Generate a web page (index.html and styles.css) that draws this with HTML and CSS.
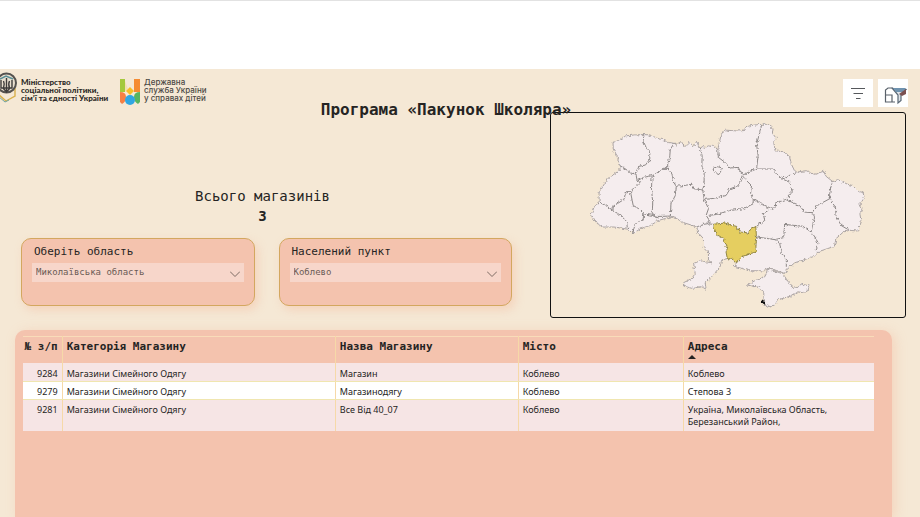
FILE: index.html
```html
<!DOCTYPE html>
<html lang="uk">
<head>
<meta charset="utf-8">
<title>Програма «Пакунок Школяра»</title>
<link rel="stylesheet" href="styles.css">
</head>
<body>
<main class="report">
  <header class="header">
    <div class="logos">
      <div class="logo ministry">
        <svg class="emblem" viewBox="0 0 17 34" aria-hidden="true">
          <path d="M-2 23 L6 30 L15 25 V17" fill="none" stroke="#d8b04c" stroke-width="1.4"/>
          <path d="M-2 25 L5 31 L9 29" fill="none" stroke="#6fa3a0" stroke-width="1"/>
          <circle cx="6.500" cy="12" r="9.500" fill="#e9dfcf" stroke="#55524f" stroke-width="2"/>
          <path d="M0 8 L6 5 L13 8" fill="none" stroke="#5b8f96" stroke-width="1.500"/>
          <path d="M1 9 V17 H12 V9 M6.500 7 V21 M3.500 10 Q5 13 3.500 17 M9.500 10 Q8 13 9.500 17 M3 17 L6.500 21 L10 17" fill="none" stroke="#3e3c3b" stroke-width="1.400"/>
        </svg>
        <p class="logo-text strong">Міністерство<br>соціальної політики,<br>сім’ї та єдності України</p>
      </div>
      <div class="logo">
        <svg class="mark" viewBox="0 0 20 26" aria-hidden="true">
          <path d="M0 0H5V13H0Z" fill="#a5c93c"/>
          <path d="M14 0H20V13H14Z" fill="#f58b32"/>
          <path d="M5 2 L8 10 L5 13Z" fill="#f3dfae"/>
          <path d="M10 8 L14 12 L10 16 L6 12Z" fill="#f8bd26"/>
          <path d="M0 13 Q6 13 6 18 Q6 23 2 25 L0 23Z" fill="#f58045"/>
          <path d="M20 13 Q14 13 14 18 Q14 23 18 25 L20 23Z" fill="#58b560"/>
          <circle cx="10" cy="21" r="5" fill="#30a6e2"/>
        </svg>
        <p class="logo-text">Державна<br>служба України<br>у справах дітей</p>
      </div>
    </div>
    <h1 class="title">Програма «Пакунок Школяра»</h1>
    <div class="actions">
      <button class="icon-button" type="button" aria-label="Фільтри">
        <svg viewBox="0 0 30 28" aria-hidden="true"><path d="M8 9.500H22M10.500 14.500H20M13 19.500H17.500" fill="none" stroke="#55585c" stroke-width="1.200"/></svg>
      </button>
      <button class="icon-button" type="button" aria-label="Очистити фільтри">
        <svg viewBox="0 0 30 28" aria-hidden="true">
          <path d="M15 9H10L7.500 11V23H14V16H7.500M14 23H17" fill="none" stroke="#59616a" stroke-width="1.200"/>
          <path d="M14.500 9.500 L20 16 V24 L23 21.500 V16 L28 10.500Z" fill="#dfe5ea" stroke="#596774" stroke-width="1.200"/>
          <path d="M15 9H28L25 13H18Z" fill="#6f93b0"/>
          <path d="M21 15 L28 10 V15L24 17Z" fill="#7b5050"/>
        </svg>
      </button>
    </div>
  </header>

  <div class="overview">
    <section class="controls">
      <div class="total">
        <p class="total-label">Всього магазинів</p>
        <p class="total-value">3</p>
      </div>
      <div class="filters">
        <div class="card">
          <label for="region">Оберіть область</label>
          <div class="select">
            <select id="region"><option>Миколаївська область</option></select>
            <svg viewBox="0 0 10 6" aria-hidden="true"><path d="M0 .5 L5 5.500 L10 .5" fill="none" stroke="#7d6a63"/></svg>
          </div>
        </div>
        <div class="card">
          <label for="city">Населений пункт</label>
          <div class="select">
            <select id="city"><option>Коблево</option></select>
            <svg viewBox="0 0 10 6" aria-hidden="true"><path d="M0 .5 L5 5.500 L10 .5" fill="none" stroke="#7d6a63"/></svg>
          </div>
        </div>
      </div>
    </section>

    <section class="map" aria-label="Карта областей">
      <svg viewBox="-87 -6 1062 609" role="img" aria-label="Україна, Миколаївська область">
        <defs>
          <filter id="rough" x="-2%" y="-2%" width="104%" height="104%">
            <feTurbulence type="fractalNoise" baseFrequency=".12" numOctaves="2" seed="4"/>
            <feDisplacementMap in="SourceGraphic" scale="12" xChannelSelector="R" yChannelSelector="G"/>
          </filter>
        </defs>
        <g filter="url(#rough)">
          <path class="land" d="M97 80L105 78 128 65 135 60 165 57 190 56 205 57 225 66 250 72 262 80 282 82 290 88 296 80 305 82 312 88 318 92 325 80 333 84 340 93 350 76 356 93 360 97 368 92 375 95 385 90 393 92 400 88 408 96 413 103 415 95 418 80 422 62 430 48 440 43 470 45 490 45 498 32 520 28 545 25 565 25 580 38 578 52 590 68 582 80 586 105 612 108 630 122 635 145 647 170 680 165 705 176 732 167 740 182 760 198 775 192 805 206 820 210 838 228 852 232 855 248 842 265 848 280 842 295 846 320 835 347 810 345 792 350 770 370 765 393 745 400 715 410 705 423 670 435 645 443 620 465 615 475 590 466 565 460 550 467 510 467 462 453 470 443 460 433 442 430 425 435 420 455 395 485 375 503 378 523 365 515 335 520 310 513 310 503 335 490 345 475 340 445 360 437 395 443 385 435 385 410 370 395 370 370 352 350 350 335 330 328 310 322 290 310 270 305 235 315 210 330 180 340 165 350 157 355 145 342 100 335 65 335 45 320 30 300 40 275 55 260 55 232 80 190 118 163 118 150 108 118 98 100Z"/>
          <path class="land" d="M563 460L585 467 610 477 620 492 640 520 655 517 665 507 690 513 685 527 670 533 655 531 635 543 620 547 595 555 585 570 570 576 555 570 552 545 552 530 535 517 502 510 525 497 555 485 560 475Z"/>
          <path class="border" d="M190 56L188 75 197 95 208 112 208 130 195 148 175 152 166 175M118 150L135 160 150 172 166 175 170 195 190 185 215 180 230 172 245 158 262 158M282 82L270 100 268 125 262 145 262 158 275 175 280 200 288 212 285 240 272 265 270 302 235 303 215 298 217 260 213 220 215 180M172 193L180 198 165 215 150 230 135 232 130 252 98 272 97 285M55 260L75 270 97 285 120 300 138 318 140 335 157 355M150 230L155 255 158 270 175 280 190 295 215 300 235 308M190 295L188 312 165 325 160 340 157 355M288 212L310 210 335 206 342 220 362 222 370 225M360 97L366 120 365 150 372 170 372 200 368 225 372 250 385 280 378 300 388 315 382 325 400 327M350 335L365 328 382 325M372 252L405 248 438 240 450 220 475 210 487 180M385 300L410 297 450 285 490 280 520 265 520 250 512 235 515 210 500 195 487 180M413 103L415 125 435 140 450 157 475 155 487 179 510 168 530 160 580 160 595 178 608 190 630 200 638 230 618 252 590 262 580 282 540 262 520 250M545 25L540 50 530 85 535 120 530 160M608 188L647 172M618 252L660 270 675 290 700 292 710 272 750 250 752 222 760 198M752 252L768 275 770 300 785 330 810 345M700 292L705 305 700 325 695 350 710 370 715 385 710 405M695 350L670 333 615 327 612 367 585 373 530 365M585 373L600 385 605 415 620 430 620 455M530 333L555 315 550 295 565 285 560 275M399 158L413 153 427 157 421 169 415 178 408 170 401 166Z"/>
          <path class="selected" d="M400 327L435 323 455 330 470 333 480 350 505 353 515 337 528 335 530 370 528 395 530 410 505 417 485 425 470 443 460 433 442 430 438 410 445 400 430 380 432 370 408 357Z"/>
          <path class="mark-point" d="M543 562L550 556 556 558 553 568 545 566Z"/>
        </g>
      </svg>
    </section>
  </div>

  <section class="panel">
    <table>
      <colgroup><col class="c-num"><col class="c-cat"><col class="c-name"><col class="c-city"><col></colgroup>
      <thead>
        <tr><th class="num">№ з/п</th><th>Категорія Магазину</th><th>Назва Магазину</th><th>Місто</th><th aria-sort="ascending">Адреса<span class="sort"></span></th></tr>
      </thead>
      <tbody>
        <tr><td class="num">9284</td><td>Магазини Сімейного Одягу</td><td>Магазин</td><td>Коблево</td><td>Коблево</td></tr>
        <tr><td class="num">9279</td><td>Магазини Сімейного Одягу</td><td>Магазинодягу</td><td>Коблево</td><td>Степова 3</td></tr>
        <tr><td class="num">9281</td><td>Магазини Сімейного Одягу</td><td>Все Від 40_07</td><td>Коблево</td><td>Україна, Миколаївська Область,<br>Березанський Район,</td></tr>
      </tbody>
    </table>
  </section>
</main>
</body>
</html>
```
FILE: styles.css
```css
* { box-sizing: border-box; }

body {
  margin: 0;
  min-height: 100vh;
  display: flex;
  flex-direction: column;
  padding-top: 68px;
  border-top: 1px solid #e2e2e2;
  background: #fff;
  color: #252423;
  font-family: "Noto Sans", sans-serif;
}

p, h1 { margin: 0; }

.report {
  flex: 1;
  display: flex;
  flex-direction: column;
  background: #f5e8d5;
  overflow: hidden;
}

.header {
  display: grid;
  grid-template-columns: 1fr auto 1fr;
  height: 43px;
  padding-right: 12px;
}

.logos { display: flex; gap: 9px; }
.logo { display: flex; gap: 4px; }
.ministry { width: 111px; }
.emblem { width: 17px; height: 34px; margin-top: 2px; }
.mark { width: 20px; height: 26px; margin-top: 10px; }

.logo-text {
  padding-top: 9px;
  font: 500 8px/8px "Inter", sans-serif;
  color: #4c4945;
  white-space: nowrap;
}
.logo-text.strong { font-family: "Lato", sans-serif; font-weight: 900; color: #2c2926; }

.title {
  align-self: end;
  margin-bottom: -8px;
  padding-right: 16px;
  position: relative;
  font: 700 16px/20px "DejaVu Sans Mono", monospace;
  white-space: nowrap;
}

.actions { display: flex; justify-content: flex-end; gap: 5px; padding-top: 10px; }
.icon-button { width: 30px; height: 28px; padding: 0; border: 0; background: #fff; }
.icon-button svg { display: block; width: 30px; height: 28px; }

.overview {
  display: grid;
  grid-template-columns: 1fr 356px;
  padding-right: 14px;
}

.controls {
  display: flex;
  flex-direction: column;
  justify-content: space-between;
  padding: 74px 38px 12px 21px;
}

.total {
  padding-right: 8px;
  text-align: center;
  font: 14px/20px "DejaVu Sans Mono", monospace;
}
.total-value { font-weight: 700; }

.filters { display: grid; grid-template-columns: 1fr 1fr; gap: 24px; }

.card {
  height: 68px;
  padding: 5px 10px;
  border: 1px solid #d3a75f;
  border-radius: 10px;
  background: #f4c3ae;
  box-shadow: 3px 4px 10px rgba(244, 180, 150, .4);
}
.card label {
  display: block;
  padding-left: 2px;
  font: 11px/16px "DejaVu Sans Mono", monospace;
}

.select { position: relative; margin-top: 3px; }
.select select {
  display: block;
  width: 100%;
  height: 19px;
  padding: 0 4px;
  border: 0;
  border-radius: 0;
  appearance: none;
  background: #f7d6ca;
  color: #6b5b55;
  font: 9px/19px "DejaVu Sans Mono", monospace;
}
.select svg { position: absolute; right: 4px; top: 8px; width: 10px; height: 6px; }

.map {
  padding: 1px;
  border: 1px solid #111;
  border-radius: 3px;
}
.map svg { display: block; width: 100%; }
.land { fill: #f5edee; stroke: #aaa3a2; stroke-width: 3; }
.border { fill: none; stroke: #8c8786; stroke-width: 3; }
.selected { fill: #e5ce60; stroke: #8f8548; stroke-width: 3; }
.mark-point { fill: #111; }

.panel {
  flex: 1;
  margin: 12px 28px 0 15px;
  padding: 6px 18px 0 8px;
  border-radius: 10px 10px 0 0;
  background: #f4c3ae;
  box-shadow: 3px 2px 12px rgba(244, 180, 150, .4);
}

table {
  width: 100%;
  table-layout: fixed;
  border-collapse: collapse;
  border-top: 1px solid #f9dcb9;
}
.c-num { width: 4.6%; }
.c-cat { width: 32.1%; }
.c-name { width: 21.5%; }
.c-city { width: 19.4%; }

th, td { padding: 0 4px; text-align: left; vertical-align: top; }
th + th, td + td { border-left: 1px solid #f6d9a8; }
th {
  height: 27px;
  padding-top: 2px;
  font: 700 11px/16px "DejaVu Sans Mono", monospace;
  white-space: nowrap;
}
td {
  padding-top: 4px;
  padding-bottom: 1px;
  font-size: 9px;
  line-height: 12px;
  border-bottom: 1px solid #f0e6b0;
  background: #f6e5e5;
}
tbody tr:first-child td { padding-top: 5px; }
tbody tr:nth-child(2) td { background: #fff; }
tbody tr:last-child td { border-bottom: 0; padding-bottom: 3px; }
.num { text-align: right; }
th.num { padding-left: 0; }

.sort {
  display: block;
  width: 0;
  border: 4px solid transparent;
  border-top: 0;
  border-bottom-color: #252423;
}
```
